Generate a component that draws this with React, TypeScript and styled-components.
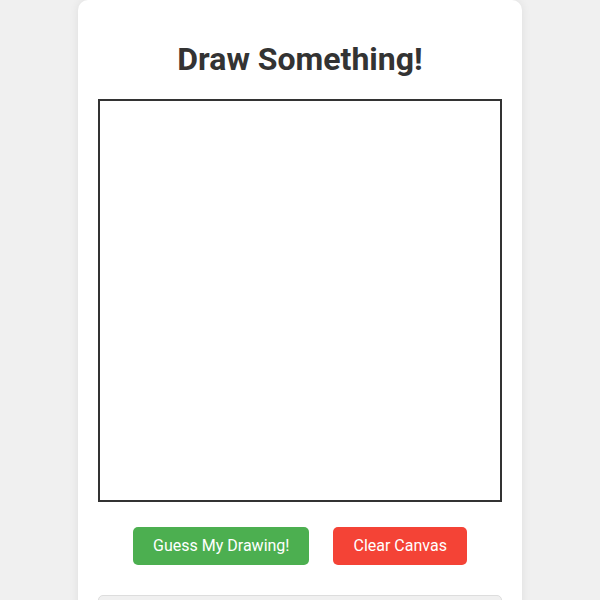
import React, { useRef } from 'react';
import styled, { createGlobalStyle } from "styled-components";

const GlobalStyle = createGlobalStyle`
  * {
    box-sizing: border-box;
  }

  body {
    margin: 0;
    background-color: #f0f0f0;
    font-family: Roboto, "Liberation Sans", sans-serif;
    color: #333;
  }
`;

const Page = styled.div`
  display: flex;
  justify-content: center;
`;

const Card = styled.div`
  width: 444px;
  padding: 20px;
  background-color: #fff;
  border-radius: 10px;
  box-shadow: 0 0 10px rgba(0, 0, 0, 0.08);
  display: flex;
  flex-direction: column;
  align-items: center;
`;

const Title = styled.h1`
  font-size: 32px;
  font-weight: 700;
  line-height: 37.5px;
  margin: 21px 0 20px;
  color: #333;
`;

const Canvas = styled.canvas`
  display: block;
  width: 404px;
  height: 403px;
  border: 2px solid #333;
  background-color: #fff;
`;

const ButtonRow = styled.div`
  display: flex;
  justify-content: center;
  gap: 24px;
  margin-top: 25px;
`;

const ActionButton = styled.button<{ $color: string }>`
  height: 38px;
  padding: 0 20px;
  border: none;
  border-radius: 5px;
  background-color: ${(p) => p.$color};
  color: #fff;
  font-family: Roboto, "Liberation Sans", sans-serif;
  font-size: 16px;
  cursor: pointer;
`;

const ResultBox = styled.div`
  width: 404px;
  min-height: 60px;
  margin-top: 30px;
  background-color: #f0f0f0;
  border: 1px solid #ddd;
  border-radius: 5px;
`;

export default function App() {
  const canvasRef = useRef<HTMLCanvasElement>(null);

  const clearCanvas = () => {
    const ctx = canvasRef.current?.getContext("2d");
    if (ctx && canvasRef.current) {
      ctx.clearRect(0, 0, canvasRef.current.width, canvasRef.current.height);
    }
  };

  return (
    <Page>
      <GlobalStyle />
      <Card>
        <Title>Draw Something!</Title>
        <Canvas ref={canvasRef} width={400} height={400} />
        <ButtonRow>
          <ActionButton $color="#4caf50">Guess My Drawing!</ActionButton>
          <ActionButton $color="#f44336" onClick={clearCanvas}>Clear Canvas</ActionButton>
        </ButtonRow>
        <ResultBox />
      </Card>
    </Page>
  );
}
